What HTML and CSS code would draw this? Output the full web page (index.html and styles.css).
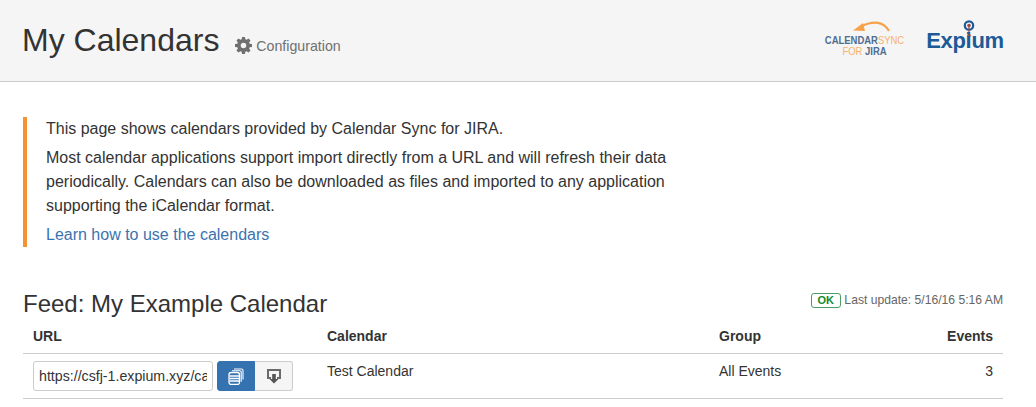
FILE: index.html
```html
<!DOCTYPE html>
<html lang="en">
<head>
    <meta charset="UTF-8">
    <title>My Calendars</title>
    <link rel="stylesheet" href="styles.css">
</head>
<body>
    <header class="pageHeader">
        <div class="titleBox">
            <h1>My Calendars</h1>
            <a class="configLink" href="#">
                <svg class="gear" viewBox="0 0 16 16" width="17" height="17">
                    <path fill="#707070" fill-rule="evenodd" d="M6.700 0h2.600l.4 2.200 1.200.5 1.900-1.300 1.800 1.800-1.300 1.900.5 1.200 2.200.4v2.600l-2.200.4-.5 1.200 1.300 1.900-1.800 1.800-1.900-1.300-1.200.5-.4 2.200H6.700l-.4-2.200-1.200-.5-1.900 1.300-1.800-1.800 1.300-1.900-.5-1.200L0 9.300V6.700l2.200-.4.500-1.200-1.300-1.900 1.800-1.800 1.900 1.300 1.200-.5zM8 5.400a2.600 2.600 0 1 0 0 5.200 2.600 2.600 0 0 0 0-5.200z"/>
                </svg>
                Configuration
            </a>
        </div>
        <div class="logos">
            <div class="syncLogo">
                <svg class="syncArrow" viewBox="0 0 37 13" width="37" height="13">
                    <path d="M36 11C31 2 21 0 9 6" fill="none" stroke="#f7a24b" stroke-width="2.200"/>
                    <path d="M0 10.500l10-7.500 2 8z" fill="#f7a24b"/>
                </svg>
                <div class="syncLine"><span class="blueText">CALENDAR</span><span class="orangeText">SYNC</span></div>
                <div class="syncLine"><span class="orangeText">FOR</span> <span class="blueText">JIRA</span></div>
            </div>
            <div class="expiumLogo">
                <svg class="expiumDot" viewBox="0 0 12 18" width="12" height="18">
                    <circle cx="6" cy="5.500" r="4.200" fill="none" stroke="#1d5a96" stroke-width="2.200"/>
                    <path d="M6 5.500V16" stroke="#9c4a45" stroke-width="1.200"/>
                    <circle cx="6" cy="5.500" r="1.800" fill="#9c4a45"/>
                    <circle cx="6" cy="15.500" r="1.800" fill="#9c4a45"/>
                </svg>
                <span>Expium</span>
            </div>
        </div>
    </header>

    <main class="content">
        <div class="notice">
            <p>This page shows calendars provided by Calendar Sync for JIRA.</p>
            <p>Most calendar applications support import directly from a URL and will refresh their data periodically. Calendars can also be downloaded as files and imported to any application supporting the iCalendar format.</p>
            <p><a href="#">Learn how to use the calendars</a></p>
        </div>

        <div class="feedHead">
            <h2>Feed: My Example Calendar</h2>
            <div class="status"><span class="okLabel">OK</span> Last update: 5/16/16 5:16 AM</div>
        </div>

        <table class="feedTable">
            <thead>
                <tr>
                    <th class="urlCol">URL</th>
                    <th class="calCol">Calendar</th>
                    <th>Group</th>
                    <th class="eventsCol">Events</th>
                </tr>
            </thead>
            <tbody>
                <tr>
                    <td>
                        <div class="urlBox">
                            <input class="urlInput" type="text" value="https://csfj-1.expium.xyz/calendars/feed/1.ics">
                            <button class="btn btnCopy" type="button">
                                <svg viewBox="0 0 16 17" width="16" height="17">
                                    <path d="M6 1h7.500A1.500 1.500 0 0 1 15 2.500v9" fill="none" stroke="#fff" stroke-width="1.100"/>
                                    <path d="M4 2.800h7.700A1.500 1.500 0 0 1 13.200 4.300v9.500" fill="none" stroke="#fff" stroke-width="1.100"/>
                                    <rect x="1" y="4.500" width="10.500" height="12" rx="2.200" fill="none" stroke="#fff" stroke-width="1.300"/>
                                    <path d="M1.500 8h9.500M1.500 10.500h9.500M1.500 13h9.500" stroke="#fff" stroke-width="1.300"/>
                                </svg>
                            </button>
                            <button class="btn btnDownload" type="button">
                                <svg viewBox="0 0 16 16" width="16" height="16">
                                    <path d="M5 10H2V2h12v8h-3" fill="none" stroke="#6a6a6a" stroke-width="2"/>
                                    <path d="M6.200 6h3.600v5h2.700L8 15.500 3.500 11h2.700z" fill="#555"/>
                                </svg>
                            </button>
                        </div>
                    </td>
                    <td>Test Calendar</td>
                    <td>All Events</td>
                    <td class="eventsCol">3</td>
                </tr>
            </tbody>
        </table>
    </main>
</body>
</html>
```

FILE: styles.css
```css
*{
    box-sizing: border-box;
    margin: 0;
    padding: 0;
}
html{
    background: #fff;
}
body{
    font-family: "Liberation Sans", Arial, sans-serif;
    font-size: 14px;
    line-height: 20px;
    color: #333;
    overflow: hidden;
}
a{
    color: #3b73af;
    text-decoration: none;
}
.pageHeader{
    display: flex;
    align-items: center;
    justify-content: space-between;
    height: 82px;
    padding: 0 33px 2px 22px;
    background: #f5f5f5;
    border-bottom: 1px solid #ccc;
}
.titleBox{
    display: flex;
    align-items: baseline;
}
h1{
    font-size: 32px;
    font-weight: 400;
    line-height: 40px;
}
.configLink{
    margin-left: 16px;
    color: #707070;
    font-size: 14.200px;
}
.gear{
    vertical-align: -3px;
}
.logos{
    display: flex;
    align-items: flex-start;
    margin-bottom: 2px;
}
.syncLogo{
    width: 81px;
    margin-right: 22px;
    font-size: 11px;
    line-height: 11px;
    font-weight: 700;
    text-align: center;
    white-space: nowrap;
}
.syncArrow{
    display: block;
    margin: 0 0 2px 29px;
}
.syncLine{
    width: 95px;
    margin-left: -7px;
    transform: scaleX(.86);
    transform-origin: center;
}
.blueText{
    color: #4f6d8f;
}
.orangeText{
    color: #f9b26b;
    font-weight: 400;
}
.expiumLogo{
    display: flex;
    flex-direction: column;
    align-items: center;
    width: 76px;
    color: #1d5a96;
    font-size: 22px;
    font-weight: 700;
    line-height: 22px;
    letter-spacing: -.3px;
}
.expiumDot{
    margin: 0 0 -8px 8px;
}
.content{
    padding: 35px 33px 0 23px;
}
.notice{
    width: 673px;
    padding-left: 19px;
    border-left: 4px solid #f79232;
    font-size: 16px;
    line-height: 24px;
}
.notice p{
    margin-bottom: 5px;
}
.notice p:last-child{
    margin-bottom: 0;
}
.feedHead{
    display: flex;
    justify-content: space-between;
    margin-top: 42px;
}
h2{
    font-size: 24px;
    font-weight: 400;
    line-height: 30px;
}
.status{
    margin-top: 3px;
    color: #666;
    font-size: 12.150px;
    line-height: 16px;
}
.okLabel{
    display: inline-block;
    padding: 0 6px;
    border: 1px solid #4c9e6b;
    border-radius: 3px;
    color: #14892c;
    font-size: 11px;
    line-height: 13px;
    font-weight: 700;
}
.feedTable{
    width: 100%;
    border-collapse: collapse;
}
.feedTable th{
    padding: 7px 10px;
    text-align: left;
    border-bottom: 1px solid #ccc;
}
.feedTable td{
    padding: 7px 10px 6px;
    height: 45px;
    vertical-align: top;
    border-bottom: 1px solid #ccc;
}
.urlCol{
    width: 294px;
}
.calCol{
    width: 392px;
}
.feedTable .eventsCol{
    text-align: right;
}
.urlBox{
    display: flex;
}
.urlInput{
    width: 180px;
    height: 30px;
    padding: 4px 5px;
    margin-right: 4px;
    border: 1px solid #ccc;
    border-radius: 3px;
    background: #fff;
    color: #333;
    font-family: inherit;
    font-size: 14.200px;
}
.btn{
    display: flex;
    align-items: center;
    justify-content: center;
    width: 38px;
    height: 30px;
    border: 1px solid #ccc;
}
.btnCopy{
    background: #3572b0;
    border-color: #3572b0;
    border-radius: 3px 0 0 3px;
}
.btnDownload{
    background: #f5f5f5;
    border-left: 0;
    border-radius: 0 3px 3px 0;
}
```
